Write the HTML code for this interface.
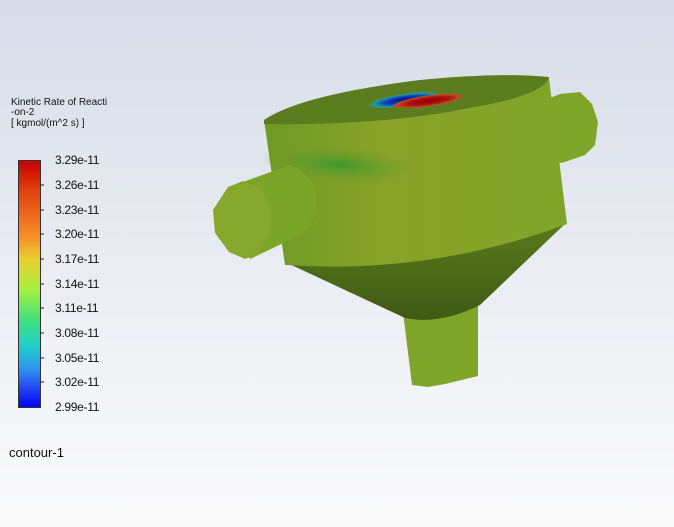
<!DOCTYPE html>
<html><head><style>
html,body{margin:0;padding:0}
body{width:674px;height:527px;overflow:hidden;position:relative;background:linear-gradient(#d6dce8 0%,#e6e9f0 40%,#f3f4f7 75%,#fafafb 100%);font-family:"Liberation Sans",sans-serif;color:#111}
.t{position:absolute;font-size:10px;line-height:10px;left:11px}
.l{position:absolute;left:55px;font-size:12px;line-height:14px;letter-spacing:-0.3px}
</style></head><body>
<div class="t" style="top:98px">Kinetic Rate of Reacti</div>
<div class="t" style="top:108px">-on-2</div>
<div class="t" style="top:119px">[ kgmol/(m^2 s) ]</div>
<div style="position:absolute;left:18px;top:160px;width:21px;height:246px;border:1px solid #333;background:linear-gradient(#c80000,#e04010 12%,#f98a25 30%,#e8d030 40%,#a8f040 52%,#40e080 65%,#20d0c8 75%,#3090f0 85%,#2040f0 93%,#0000ff)"></div>
<svg style="position:absolute;left:0;top:0" width="674" height="527">
<g stroke="#222" stroke-width="1">
<line x1="40" y1="185" x2="44" y2="185"/><line x1="40" y1="210" x2="44" y2="210"/><line x1="40" y1="234" x2="44" y2="234"/><line x1="40" y1="259" x2="44" y2="259"/><line x1="40" y1="284" x2="44" y2="284"/><line x1="40" y1="308" x2="44" y2="308"/><line x1="40" y1="333" x2="44" y2="333"/><line x1="40" y1="358" x2="44" y2="358"/><line x1="40" y1="382" x2="44" y2="382"/>
</g>
<defs>
<linearGradient id="body" x1="0" y1="0" x2="1" y2="0"><stop offset="0" stop-color="#6e9a25"/><stop offset="0.4" stop-color="#8aa228"/><stop offset="1" stop-color="#7fa528"/></linearGradient>
<linearGradient id="cone" x1="0" y1="0" x2="0" y2="1"><stop offset="0" stop-color="#5a7a1c"/><stop offset="1" stop-color="#3f5a14"/></linearGradient>
<radialGradient id="blue" cx="0.5" cy="0.5" r="0.5"><stop offset="0" stop-color="#000090"/><stop offset="0.5" stop-color="#1040c0"/><stop offset="0.8" stop-color="#20a0a0"/><stop offset="1" stop-color="#5a7a20" stop-opacity="0"/></radialGradient>
<radialGradient id="red" cx="0.5" cy="0.5" r="0.5"><stop offset="0" stop-color="#900000"/><stop offset="0.55" stop-color="#b01010"/><stop offset="0.85" stop-color="#c05020"/><stop offset="1" stop-color="#5a7a20" stop-opacity="0"/></radialGradient>
<radialGradient id="gr" cx="0.5" cy="0.5" r="0.5"><stop offset="0" stop-color="#3a9a30"/><stop offset="1" stop-color="#7a9a28" stop-opacity="0"/></radialGradient>
</defs>
<path d="M545,100 L560,94 L580,92 L592,104 L598,122 L595,145 L585,155 L565,162 L548,165 Z" fill="#7fa52a"/>
<path d="M403,312 L478,305 L478,376 L445,384 L428,387 L412,385 Z" fill="#7fa52a"/>
<path d="M285,262 Q420,278 567,222 L480,305 Q440,325 405,318 Z" fill="url(#cone)"/>
<path d="M264,120 L549,78 L567,224 Q430,275 285,265 Z" fill="url(#body)"/>
<ellipse cx="340" cy="165" rx="80" ry="20" fill="url(#gr)" transform="rotate(5 340 165)"/>
<path d="M264,120 Q300,95 420,80 Q500,72 549,77 Q545,95 470,108 Q380,126 264,124 Z" fill="#5c7c20"/>
<ellipse cx="405" cy="100" rx="40" ry="7" fill="url(#blue)" transform="rotate(-8 405 100)"/>
<ellipse cx="428" cy="101" rx="38" ry="6" fill="url(#red)" transform="rotate(-8 428 101)"/>
<path d="M232,186 L290,165 Q315,175 317,200 Q315,225 300,235 L250,259 Z" fill="#7ba528"/>
<path d="M228,187 L243,181 L262,190 L272,208 L270,232 L258,254 L245,259 L229,252 L215,233 L213,210 Z" fill="#86a82c"/>
</svg>
<div class="l" style="top:153px">3.29e-11</div>
<div class="l" style="top:178px">3.26e-11</div>
<div class="l" style="top:203px">3.23e-11</div>
<div class="l" style="top:227px">3.20e-11</div>
<div class="l" style="top:252px">3.17e-11</div>
<div class="l" style="top:277px">3.14e-11</div>
<div class="l" style="top:301px">3.11e-11</div>
<div class="l" style="top:326px">3.08e-11</div>
<div class="l" style="top:351px">3.05e-11</div>
<div class="l" style="top:375px">3.02e-11</div>
<div class="l" style="top:400px">2.99e-11</div>
<div style="position:absolute;left:9px;top:445px;font-size:13px">contour-1</div>
</body></html>
